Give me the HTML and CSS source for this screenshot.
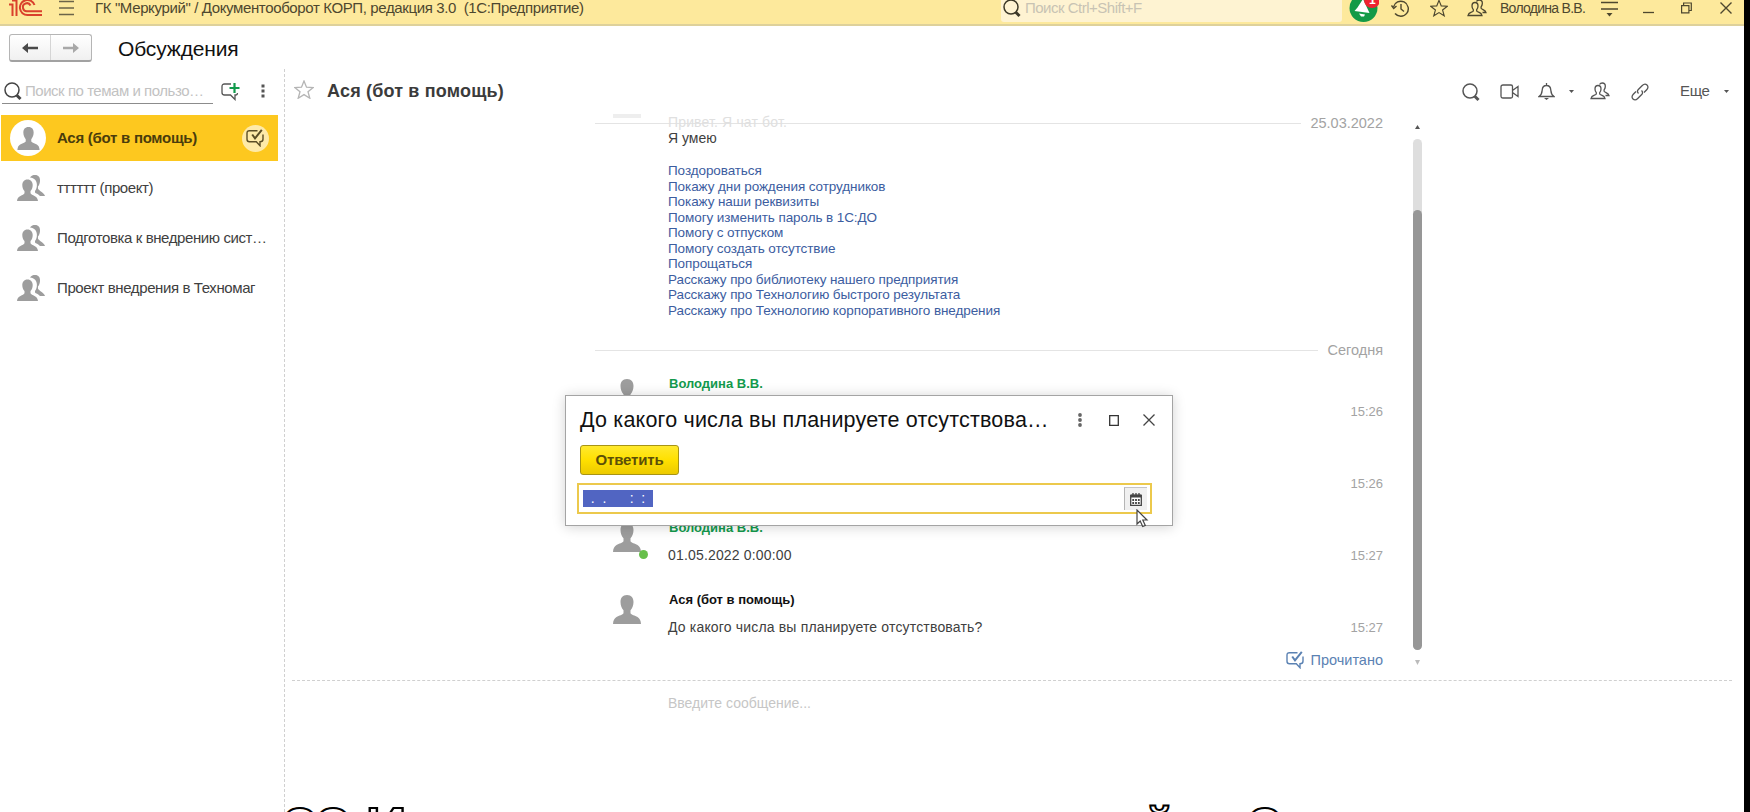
FILE: index.html
```html
<!DOCTYPE html>
<html lang="ru">
<head>
<meta charset="utf-8">
<title>Обсуждения</title>
<link rel="stylesheet" href="styles.css">
</head>
<body>
<svg class="defs" width="0" height="0">
  <symbol id="person" viewBox="0 0 28 29"><path d="M14 0C9.500 0 7.500 3 7.500 7c0 3.700 1.300 6.500 3 8.300v3C9.800 20 6 20.500 3.500 22 1.300 23.300.2 25.500 0 29h28c-.2-3.500-1.300-5.700-3.500-7-2.500-1.500-6.300-2-7-3.700v-3c1.700-1.800 3-4.600 3-8.300 0-4-2-7-6.500-7z" fill="#9d9d9d"/></symbol>
  <symbol id="group" viewBox="0 0 28 26"><path d="M13 2.500C14.500.3 16 0 18 0c3.600 0 5.300 2.500 5 6.200-.2 2.600-1.200 4.300-2 5.300v2.300c1 1.900 6.600 4.500 7 7.200h-5c-1.600-2.200-4.300-2.600-5-3.600V16c1.300-1.700 1.900-3.400 1.900-6.300 0-4-2.400-6.800-6.900-7.200z" fill="#9d9d9d"/><path d="M10.500 4.500C7 4.500 5.300 7 5.300 10c0 2.700.9 4.700 2.200 6v2.300C6.500 20.700.3 20.500 0 26h21c-.3-5.500-6.500-5.300-7.500-7.700V16c1.300-1.300 2.200-3.300 2.200-6 0-3-1.700-5.500-5.200-5.500z" fill="#9d9d9d"/></symbol>
  <symbol id="lens" viewBox="0 0 18 19"><circle cx="8" cy="8" r="7" fill="none" stroke="currentColor" stroke-width="1.500"/><path d="M12.500 13l4 4" stroke="currentColor" stroke-width="3"/></symbol>
  <symbol id="people" viewBox="0 0 20 18"><g fill="none" stroke="currentColor" stroke-width="1.300"><path d="M8 3.500C5.800 3.500 5 5 5 7c0 1.500.5 2.800 1.300 3.600v1.400C5.500 13.500 1.500 13 1 16.500h14c-.5-3.500-4.500-3-5.300-4.500v-1.400C10.500 9.800 11 8.500 11 7c0-2-.8-3.500-3-3.500z"/><path d="M9.500 2.500C10.300 1.200 11.300 1 12.300 1c2.200 0 3.200 1.500 3 3.600-.1 1.600-.6 2.500-1.200 3.300v1.300c.7 1.500 4.400 1.600 4.900 4.300h-3.500"/></g></symbol>
  <symbol id="chatcheck" viewBox="0 0 19 18"><g fill="none" stroke="currentColor" stroke-width="1.400"><path d="M11.500 1.700H3.500Q1 1.700 1 4.200v6q0 2.500 2.500 2.500h6.800l3.700 4v-4q3 0 3-2.500V5.500"/><path d="M6.200 5.500l2.800 3.800L15.800.8" stroke-width="2"/></g></symbol>
  <symbol id="star" viewBox="0 0 20 19"><path d="M10 1l2.500 6.200 6.700.4-5.200 4.200 1.800 6.400-5.800-3.600-5.800 3.600L6 11.800.8 7.600l6.700-.4z" fill="none" stroke="currentColor" stroke-width="1.300"/></symbol>
</svg>

<div class="app">
  <header class="topbar">
    <svg class="logo" width="34" height="17" viewBox="0 0 34 17"><g fill="none" stroke="#d9402c" stroke-width="2"><path d="M0 4.500h3.500V16M3 .5h4.500V16"/><path d="M25.500 5A7.500 7.500 0 1 0 18.500 15H33"/><path d="M21.500 5.500A4 4 0 1 0 18.500 11.200H33"/></g></svg>
    <svg class="burger" width="17" height="17" viewBox="0 0 17 17"><path d="M1 1.500h15M1 8h15M1 14.500h15" stroke="#6b6448" stroke-width="1.300"/></svg>
    <div class="app-title">ГК "Меркурий" / Документооборот КОРП, редакция 3.0&nbsp; (1С:Предприятие)</div>
    <div class="global-search"><svg width="18" height="19"><use href="#lens"/></svg><span>Поиск Ctrl+Shift+F</span></div>
    <svg class="notify" width="30" height="30" viewBox="0 0 30 30"><circle cx="14.500" cy="15" r="14" fill="#139a46"/><path d="M14 6L20.500 20 5.500 18 8.500 14.500z" fill="#fff"/><path d="M10 20.500l6 1-1 2h-3z" fill="#fff"/><circle cx="23" cy="7" r="8" fill="#ef2330"/><text x="20" y="11" class="badge-num">1</text></svg>
    <svg class="i-hist" width="19" height="19" viewBox="0 0 19 19"><g fill="none" stroke="#4d472f" stroke-width="1.400"><path d="M2.500 8A7.500 7.500 0 1 1 4 14.500"/><path d="M.5 6.500l2.200 3L5.500 7M10 5v5l3 2.500"/></g></svg>
    <svg class="i-star" width="18" height="18"><use href="#star"/></svg>
    <svg class="i-people" width="20" height="18"><use href="#people"/></svg>
    <div class="user">Володина В.В.</div>
    <svg class="i-menu" width="17" height="17" viewBox="0 0 17 17"><path d="M0 2.500h17M0 9h17" stroke="#4d472f" stroke-width="1.400"/><path d="M5.500 13h6l-3 3.500z" fill="#4d472f"/></svg>
    <svg class="i-min" width="11" height="18" viewBox="0 0 11 18"><path d="M0 12.500h11" stroke="#4d472f" stroke-width="1.300"/></svg>
    <svg class="i-rest" width="11" height="12" viewBox="0 0 11 12"><path d="M.6 3.600h7.300v7.300H.6zM2.600 3.600V1h7.700v7.500H8" fill="none" stroke="#4d472f" stroke-width="1.200"/></svg>
    <svg class="i-close" width="12" height="12" viewBox="0 0 12 12"><path d="M.5.5l11 11M11.500.5l-11 11" stroke="#4d472f" stroke-width="1.400"/></svg>
  </header>

  <div class="titlebar">
    <div class="nav">
      <button><svg width="16" height="12" viewBox="0 0 16 12"><path d="M0 6l6-5v3.800h10v2.400H6V11z" fill="#4a4a4a"/></svg></button>
      <button><svg width="16" height="12" viewBox="0 0 16 12"><path d="M16 6l-6-5v3.800H0v2.400h10V11z" fill="#a8a8a8"/></svg></button>
    </div>
    <h1>Обсуждения</h1>
  </div>

  <div class="main">
    <aside class="sidebar">
      <div class="side-tools">
        <div class="side-search"><svg width="18" height="19"><use href="#lens"/></svg><span>Поиск по темам и пользо…</span></div>
        <svg class="newchat" width="19" height="19" viewBox="0 0 19 19"><path d="M10 2H3.500Q1 2 1 4.500v6Q1 13 3.500 13h6l4.500 4.500V13h1q1.500 0 1.500-2" fill="none" stroke="#555" stroke-width="1.300"/><path d="M13.500 1v10M8.500 6h10" stroke="#119a4c" stroke-width="2.200"/></svg>
        <svg class="dots" width="4" height="14" viewBox="0 0 4 14"><path d="M.5.500h3v3h-3zM.5 5.500h3v3h-3zM.5 10.500h3v3h-3z" fill="#555"/></svg>
      </div>
      <div class="row active"><div class="face"><svg width="23" height="23"><use href="#person"/></svg></div><span>Ася (бот в помощь)</span><div class="mark"><svg width="19" height="18"><use href="#chatcheck"/></svg></div></div>
      <div class="row"><svg class="grp" width="28" height="26"><use href="#group"/></svg><span>тттттт (проект)</span></div>
      <div class="row"><svg class="grp" width="28" height="26"><use href="#group"/></svg><span>Подготовка к внедрению сист…</span></div>
      <div class="row"><svg class="grp" width="28" height="26"><use href="#group"/></svg><span>Проект внедрения в Техномаг</span></div>
    </aside>

    <section class="chat">
      <div class="chat-head">
        <svg class="fav" width="20" height="19"><use href="#star"/></svg>
        <h2>Ася (бот в помощь)</h2>
        <svg class="t1" width="18" height="19"><use href="#lens"/></svg>
        <svg class="t2" width="19" height="15" viewBox="0 0 19 15"><path d="M3 1h8q1.500 0 1.500 1.500v10Q12.500 14 11 14H3q-2 0-2-2V3q0-2 2-2zM12.500 6.500L18 2.500v10l-5.500-4" fill="none" stroke="#555" stroke-width="1.300"/></svg>
        <svg class="t3" width="17" height="18" viewBox="0 0 17 18"><path d="M8.500 0v2.500M1 13.500c3-2 3-4 3.200-6.500.2-3 1.800-4.500 4.300-4.500S12.600 4 12.800 7c.2 2.500.2 4.500 3.200 6.500z" fill="none" stroke="#555" stroke-width="1.300"/><path d="M6 15h5l-2.500 2z" fill="#555"/></svg>
        <svg class="caret c1" width="5" height="3"><path d="M0 0h5L2.500 3z" fill="#555"/></svg>
        <svg class="t4" width="20" height="18"><use href="#people"/></svg>
        <svg class="t5" width="18" height="18" viewBox="0 0 18 18"><g fill="none" stroke="#555" stroke-width="1.300"><path d="M7.500 10.500C6 9 6.300 7.500 7.300 6.500l4-4C13 .8 14.700.8 16 2s1.300 3-.3 4.700L13 9.500"/><path d="M10.500 7.500c1.500 1.500 1.200 3 .2 4l-4 4C5 17.200 3.300 17.200 2 16s-1.300-3 .3-4.700L5 8.500"/></g></svg>
        <span class="more">Еще</span>
        <svg class="caret c2" width="5" height="3"><path d="M0 0h5L2.500 3z" fill="#555"/></svg>
      </div>

      <div class="chat-body">
        <div class="feed">
          <div class="ghost-bar"></div>
          <div class="sep s1"><i></i><span>25.03.2022</span></div>
          <div class="bot-text">
            <p class="faded">Привет. Я чат бот.</p>
            <p class="dark">Я умею</p>
            <ul>
              <li>Поздороваться</li>
              <li>Покажу дни рождения сотрудников</li>
              <li>Покажу наши реквизиты</li>
              <li>Помогу изменить пароль в 1С:ДО</li>
              <li>Помогу с отпуском</li>
              <li>Помогу создать отсутствие</li>
              <li>Попрощаться</li>
              <li>Расскажу про библиотеку нашего предприятия</li>
              <li>Расскажу про Технологию быстрого результата</li>
              <li>Расскажу про Технологию корпоративного внедрения</li>
            </ul>
          </div>
          <div class="sep s2"><i></i><span>Сегодня</span></div>
          <div class="msg"><svg width="28" height="29"><use href="#person"/></svg><div class="txt"><b class="green">Володина В.В.</b></div><time>15:26</time></div>
          <div class="msg"><svg width="28" height="29"></svg><div class="txt"></div><time>15:26</time></div>
          <div class="msg"><div class="av"><svg width="28" height="29"><use href="#person"/></svg><i class="online"></i></div><div class="txt"><b class="green">Володина В.В.</b><p>01.05.2022 0:00:00</p></div><time>15:27</time></div>
          <div class="msg"><svg width="28" height="29"><use href="#person"/></svg><div class="txt"><b>Ася (бот в помощь)</b><p>До какого числа вы планируете отсутствовать?</p></div><time>15:27</time></div>
          <div class="read"><svg width="19" height="18"><use href="#chatcheck"/></svg><span>Прочитано</span></div>
        </div>
        <div class="scroll">
          <svg width="5" height="4"><path d="M0 4h5L2.500 0z" fill="#555"/></svg>
          <div class="track"><div class="thumb"></div></div>
          <svg width="5" height="5"><path d="M0 0h5L2.500 5z" fill="#bbb"/></svg>
        </div>
      </div>
      <div class="composer">Введите сообщение...</div>
    </section>
  </div>

  <div class="dialog">
    <div class="dlg-head">
      <h3>До какого числа вы планируете отсутствова…</h3>
      <svg class="d-dots" width="4" height="14" viewBox="0 0 4 14"><g fill="#666"><circle cx="2" cy="2" r="1.900"/><circle cx="2" cy="7" r="1.900"/><circle cx="2" cy="12" r="1.900"/></g></svg>
      <svg class="d-max" width="10" height="11"><path d="M.7.7h8.600v9.600H.7z" fill="none" stroke="#333" stroke-width="1.300"/></svg>
      <svg class="d-close" width="12" height="12" viewBox="0 0 12 12"><path d="M.5.500l11 11M11.500.5l-11 11" stroke="#444" stroke-width="1.300"/></svg>
    </div>
    <button class="answer">Ответить</button>
    <div class="field"><span class="sel">&nbsp; .&nbsp; .&nbsp; &nbsp; &nbsp;&nbsp;:&nbsp; :</span>
      <div class="cal"><svg width="12" height="13" viewBox="0 0 12 13"><path d="M.7 2.500h10.600v9.800H.7z" fill="#fff" stroke="#444" stroke-width="1.300"/><path d="M.7 1.500h10.600v3H.7z" fill="#444"/><path d="M3 0v3M6 0v3M9 0v3" stroke="#444" stroke-width="1.300"/><path d="M2.300 7h7.500M2.300 10h7.500" stroke="#444" stroke-width="1.800" stroke-dasharray="1.800 1"/></svg></div>
    </div>
  </div>
  <svg class="cursor" width="13" height="19" viewBox="0 0 13 19"><path d="M1 1v14l3.200-3 2.500 5.500 2.600-1.100L6.800 11H11z" fill="#fff" stroke="#444" stroke-width="1.200"/></svg>
  <div class="caption"><span class="k1">ОО</span><span class="k2">И</span><span class="k3">й</span><span class="k4">О</span></div>
</div>
</body>
</html>
```
FILE: styles.css
```css
* { box-sizing: border-box; }
body { margin: 0; background: #000; font-family: "Liberation Sans", Arial, sans-serif; color: #404040; }
h1, h2, h3, p, ul { margin: 0; padding: 0; font-weight: normal; }
ul { list-style: none; }
svg { display: block; flex: none; }
.defs { position: absolute; }
.app { position: relative; width: 1744px; height: 812px; overflow: hidden; background: #fff; display: flex; flex-direction: column; white-space: nowrap; }

.topbar { height: 26px; flex: none; background: #fde99c; border-bottom: 2px solid #ded19b; display: flex; align-items: flex-start; color: #4d472f; }
.logo { margin-left: 9px; }
.burger { margin-left: 15px; }
.app-title { margin-left: 20px; width: 906px; font-size: 15px; line-height: 16px; letter-spacing: -.37px; }
.global-search { width: 341px; height: 22px; background: #fef3d2; border-radius: 0 0 3px 3px; display: flex; gap: 4px; padding-left: 2px; color: #3c3828; }
.global-search svg { margin-top: -1px; }
.global-search span { font-size: 15px; line-height: 16px; letter-spacing: -.5px; color: #c8c3b4; }
.notify { margin: -7px 0 0 7px; }
.badge-num { font-size: 12px; font-weight: bold; fill: #fff; }
.i-hist { margin: -1px 0 0 12px; }
.i-star { margin: -1px 0 0 20px; }
.i-people { margin: -1px 0 0 19px; }
.user { margin-left: 13px; width: 88px; font-size: 14px; line-height: 16px; letter-spacing: -.72px; }
.i-menu { margin-left: 13px; }
.i-min { margin-left: 25px; }
.i-rest { margin: 2px 0 0 27px; }
.i-close { margin: 2px 0 0 28px; }

.titlebar { height: 43px; flex: none; padding: 8px 0 0 9px; display: flex; align-items: flex-start; }
.nav { display: flex; width: 83px; height: 28px; border: 1px solid #b5b5b5; border-bottom: 2px solid #a2a2a2; border-radius: 3px; background: linear-gradient(#fff, #f0f0f0); }
.nav button { flex: 1; border: 0; background: none; padding: 0; display: flex; align-items: center; justify-content: center; }
.nav button + button { border-left: 1px solid #d5d5d5; }
h1 { margin-left: 26px; font-size: 21px; line-height: 29px; letter-spacing: -.15px; color: #111; }

.main { flex: 1; display: flex; min-height: 0; }
.sidebar { width: 284px; flex: none; padding-left: 1px; }
.side-tools { height: 46px; padding-top: 9px; display: flex; align-items: flex-start; }
.side-search { width: 211px; height: 26px; margin-left: 1px; border-bottom: 1px solid #8c8c8c; display: flex; gap: 3px; padding: 4px 0 0 2px; color: #444; }
.side-search span { font-size: 15px; line-height: 18px; letter-spacing: -.47px; color: #c2c2c2; }
.newchat { margin: 4px 0 0 8px; }
.dots { margin: 6px 0 0 21px; }
.row { height: 50px; display: flex; align-items: center; padding-left: 16px; }
.row span { font-size: 15px; line-height: 18px; margin-left: 12px; letter-spacing: -.4px; }
.row.active { height: 46px; width: 277px; background: #fdc81f; padding-left: 9px; margin-bottom: 2px; }
.row.active span { font-weight: bold; margin-left: 11px; width: 185px; letter-spacing: -.27px; color: #4a3c0c; }
.face { width: 36px; height: 36px; border-radius: 50%; background: #fff; display: flex; align-items: center; justify-content: center; }
.mark { width: 27px; height: 27px; border-radius: 50%; background: #feeaa8; display: flex; align-items: center; justify-content: center; color: #5a4d25; }

.chat { flex: 1; border-left: 1px dashed #d0d0d0; display: flex; flex-direction: column; }
.chat-head { height: 44px; padding-top: 9px; flex: none; display: flex; align-items: flex-start; color: #555; }
.fav { margin: 2px 0 0 9px; color: #b5b5b5; }
h2 { margin-left: 13px; width: 1135px; font-size: 18px; line-height: 26px; font-weight: bold; letter-spacing: .18px; color: #3b3b3b; }
.t1 { margin-top: 5px; }
.t2 { margin: 6px 0 0 20px; }
.t3 { margin: 5px 0 0 19px; }
.c1 { margin: 12px 0 0 14px; }
.t4 { margin: 4px 0 0 16px; }
.t5 { margin: 5px 0 0 21px; }
.more { margin-left: 31px; width: 44px; font-size: 15px; line-height: 26px; letter-spacing: -.3px; }
.c2 { margin-top: 12px; }

.chat-body { height: 568px; flex: none; display: flex; border-bottom: 1px dashed #d0d0d0; margin: 0 12px 0 7px; }
.feed { width: 1091px; padding-left: 303px; display: flex; flex-direction: column; }
.ghost-bar { width: 28px; height: 4px; margin: 1px 0 0 18px; background: #eee; flex: none; }
.sep { display: flex; align-items: center; font-size: 14.500px; line-height: 16px; height: 16px; color: #a3a3a3; flex: none; }
.sep i { flex: 1; height: 1px; background: #e4e4e4; margin-right: 9px; }
.s1 { margin-top: -3px; }
.s2 { margin-top: 24px; }
.bot-text { padding-left: 73px; margin-top: -17px; font-size: 14px; line-height: 16px; }
.faded { color: #e0e0e0; letter-spacing: .15px; }
.dark { color: #404040; margin-bottom: 17px; }
li { font-size: 13.500px; line-height: 15.500px; letter-spacing: -.09px; color: #3c5d9f; }
.msg { height: 72px; flex: none; display: flex; align-items: flex-start; padding-left: 18px; }
.s2 + .msg { margin-top: 21px; }
.av { position: relative; }
.online { position: absolute; left: 26px; top: 27px; width: 9px; height: 9px; border-radius: 50%; background: #67bf4b; }
.txt { margin-left: 27px; flex: 1; font-size: 14px; }
.txt b { display: block; font-size: 13px; line-height: 16px; margin: -3px 0 0 1px; color: #111; }
.txt b.green { color: #139a4d; }
.txt p { margin-top: 11px; line-height: 16px; letter-spacing: .17px; }
time { font-size: 13px; line-height: 16px; margin-top: 25px; color: #a3a3a3; }
.read { display: flex; justify-content: flex-end; gap: 6px; font-size: 14.500px; line-height: 18px; color: #5b82b3; margin-top: -16px; }
.scroll { width: 9px; margin-left: 30px; padding-top: 12px; display: flex; flex-direction: column; align-items: center; }
.track { width: 9px; height: 511px; margin: 10px 0; border-radius: 5px; background: #dedede; padding-top: 71px; flex: none; }
.thumb { height: 440px; border-radius: 5px; background: #979797; }
.composer { padding: 14px 0 0 383px; font-size: 14px; line-height: 16px; color: #c6c6c6; }

.dialog { position: absolute; left: 565px; top: 395px; width: 608px; height: 131px; background: #fff; border: 1px solid #a4a4a4; box-shadow: 0 1px 12px rgba(0,0,0,.18); padding: 9px 0 0 11px; }
.dlg-head { display: flex; align-items: center; height: 30px; padding-left: 3px; }
h3 { width: 498px; font-size: 21.500px; line-height: 30px; letter-spacing: .2px; color: #111; }
.d-max { margin-left: 27px; }
.d-close { margin-left: 24px; }
.answer { display: block; width: 99px; height: 30px; margin: 10px 0 0 3px; padding: 0; border: 1px solid #a79416; border-radius: 3px; background: linear-gradient(#ffe92e, #ffe000 50%, #ecca00); font: bold 15px/28px "Liberation Sans", Arial, sans-serif; letter-spacing: -.15px; color: #5c4f08; }
.field { width: 575px; height: 31px; margin-top: 8px; border: 2px solid #ecc94c; display: flex; padding: 2px 3px 2px 4px; justify-content: space-between; }
.sel { width: 70px; height: 17px; margin-top: 3px; background: #5165c2; color: #fff; font-size: 14px; line-height: 17px; overflow: hidden; }
.cal { width: 23px; height: 23px; background: #f0f0f0; border-left: 1px solid #b5b5b5; border-top: 1px solid #c5c5c5; display: flex; align-items: center; justify-content: center; }
.cursor { position: absolute; left: 1136px; top: 509px; }
.caption { position: absolute; left: 282px; top: 799px; height: 48px; display: flex; align-items: baseline; font-size: 46px; font-weight: bold; line-height: 50px; color: #fff; -webkit-text-stroke: 2px #000; }
.caption span { display: block; }
.k1 { width: 84px; letter-spacing: -2.5px; }
.k2 { width: 779px; font-size: 46px; transform: scaleX(1.22); transform-origin: 0 0; }
.k3 { width: 102px; }
```
